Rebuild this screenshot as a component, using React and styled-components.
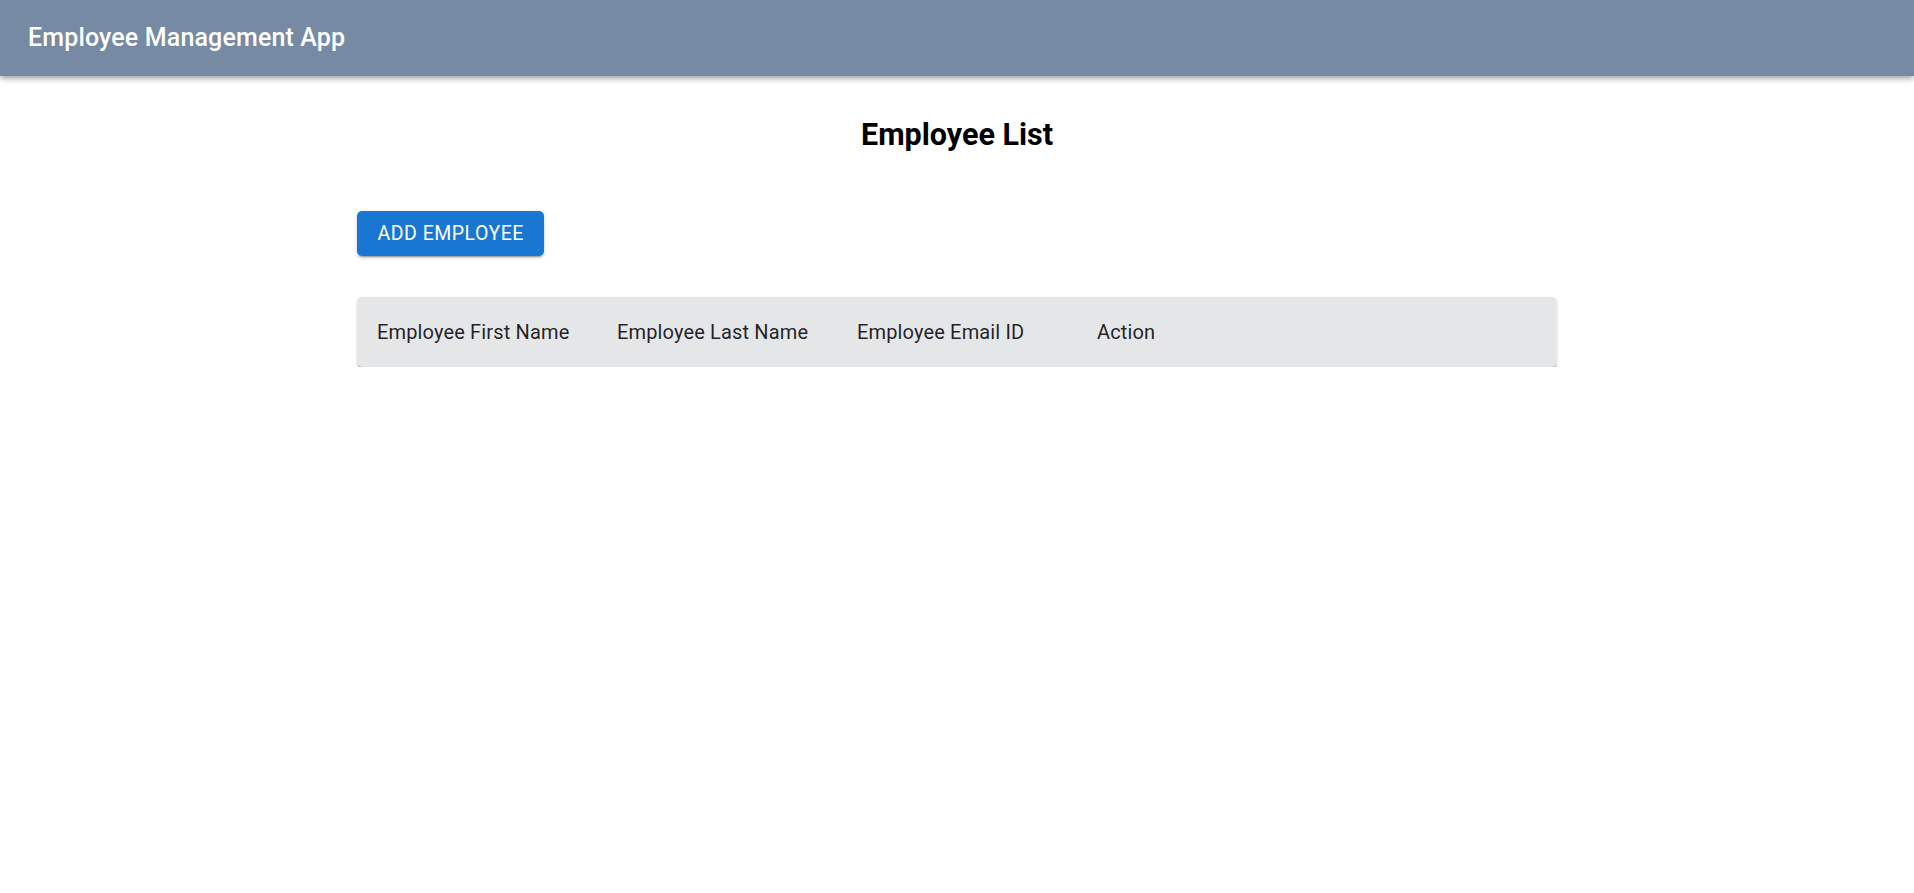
import React from "react";
import styled, { createGlobalStyle } from "styled-components";

const GlobalStyle = createGlobalStyle`
  html, body {
    margin: 0;
    padding: 0;
    background: #ffffff;
    font-family: Roboto, "Liberation Sans", Arial, sans-serif;
  }
  * { box-sizing: border-box; }
`;

const AppBar = styled.header`
  height: 76px;
  background: #778aa3;
  display: flex;
  align-items: center;
  padding: 0 28px;
  box-shadow: 0px 2px 4px -1px rgba(0,0,0,0.2), 0px 4px 5px 0px rgba(0,0,0,0.14), 0px 1px 10px 0px rgba(0,0,0,0.12);
  position: relative;
  z-index: 1;
`;

const AppTitle = styled.div`
  color: #ffffff;
  font-size: 25px;
  font-weight: 500;
  line-height: 30px;
  letter-spacing: 0.15px;
`;

const Main = styled.main`
  width: 1200px;
  margin: 0 auto;
  display: flex;
  flex-direction: column;
  align-items: flex-start;
`;

const Heading = styled.h2`
  align-self: stretch;
  text-align: center;
  font-size: 30.5px;
  font-weight: 700;
  line-height: 35px;
  color: #000000;
  margin: 41px 0 59px;
`;

const Button = styled.button`
  background: #1976d2;
  color: #ffffff;
  border: none;
  border-radius: 5px;
  padding: 7.5px 20.5px;
  font-family: Roboto, "Liberation Sans", Arial, sans-serif;
  font-size: 19.5px;
  font-weight: 400;
  letter-spacing: 0.5px;
  line-height: 30px;
  text-transform: uppercase;
  cursor: pointer;
  box-shadow: 0px 3px 1px -2px rgba(0,0,0,0.2), 0px 2px 2px 0px rgba(0,0,0,0.14), 0px 1px 5px 0px rgba(0,0,0,0.12);
`;

const Paper = styled.div`
  margin-top: 41px;
  width: 100%;
  background: #e5e6e8;
  border-radius: 5px;
  overflow: hidden;
  box-shadow: 0px 2px 1px -1px rgba(0,0,0,0.2), 0px 1px 1px 0px rgba(0,0,0,0.14), 0px 1px 3px 0px rgba(0,0,0,0.12);
`;

const Table = styled.table`
  width: 100%;
  border-collapse: collapse;
  table-layout: fixed;
`;

const HeadCell = styled.th`
  width: ${(p) => (p.$filler ? "auto" : "240px")};
  text-align: left;
  font-weight: 400;
  font-size: 20px;
  letter-spacing: 0.15px;
  line-height: 30px;
  color: rgba(0, 0, 0, 0.87);
  padding: 20px;
`;

const columns = [
  "Employee First Name",
  "Employee Last Name",
  "Employee Email ID",
  "Action",
];

export default function App() {
  return (
    <>
      <GlobalStyle />
      <AppBar>
        <AppTitle>Employee Management App</AppTitle>
      </AppBar>
      <Main>
        <Heading>Employee List</Heading>
        <Button>Add Employee</Button>
        <Paper>
          <Table>
            <thead>
              <tr>
                {columns.map((c) => (
                  <HeadCell key={c}>{c}</HeadCell>
                ))}
                <HeadCell $filler />
              </tr>
            </thead>
            <tbody />
          </Table>
        </Paper>
      </Main>
    </>
  );
}
